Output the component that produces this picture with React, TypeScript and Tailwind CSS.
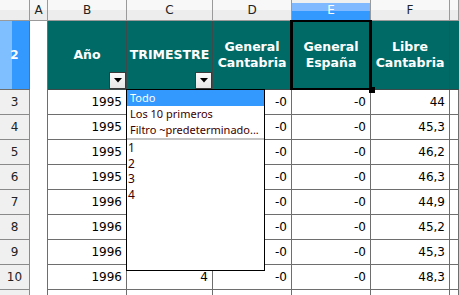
import React from "react";

const data = [
  { n: "3", b: "1995", c: "", d: "-0", e: "-0", f: "44" },
  { n: "4", b: "1995", c: "", d: "-0", e: "-0", f: "45,3" },
  { n: "5", b: "1995", c: "", d: "-0", e: "-0", f: "46,2" },
  { n: "6", b: "1995", c: "", d: "-0", e: "-0", f: "46,3" },
  { n: "7", b: "1996", c: "", d: "-0", e: "-0", f: "44,9" },
  { n: "8", b: "1996", c: "", d: "-0", e: "-0", f: "45,2" },
  { n: "9", b: "1996", c: "", d: "-0", e: "-0", f: "45,3" },
  { n: "10", b: "1996", c: "4", d: "-0", e: "-0", f: "48,3" },
  { n: "", b: "", c: "", d: "", e: "", f: "" },
];

function FilterButton() {
  return (
    <div className="absolute right-0 bottom-0 w-[17px] h-[17px] border border-[#3a3a3a] bg-[linear-gradient(to_bottom,#fafafa,#e6e6e6)] flex items-center justify-center">
      <svg width="8" height="5" viewBox="0 0 8 5">
        <path d="M0 0 L8 0 L4 4.5 Z" fill="#000" />
      </svg>
    </div>
  );
}

const colHead =
  "h-[21px] border-r border-b border-[#9a9a9a] bg-[linear-gradient(to_bottom,#f8f8f8_50%,#ededed_50%)] flex items-center justify-center text-[12px] text-[#222] leading-none";

const cell = "h-[25px] border-r border-b border-[#6e6e6e] bg-white flex items-center justify-end pr-[4px] text-[12px] text-black";

export default function App() {
  return (
    <div className="relative w-[459px] h-[295px] overflow-hidden bg-white font-['DejaVu_Sans',sans-serif]">
      {/* column header row */}
      <div className="flex">
        <div className={`w-[30px] ${colHead}`}></div>
        <div className={`w-[18px] ${colHead}`}>A</div>
        <div className={`w-[79px] ${colHead}`}>B</div>
        <div className={`w-[86px] ${colHead}`}>C</div>
        <div className={`w-[79px] ${colHead}`}>D</div>
        <div className="w-[79px] h-[21px] border-r border-b border-[#9a9a9a] bg-[linear-gradient(to_bottom,#f0f0f0_3px,#80b9ff_3px,#80b9ff_11px,#3399ff_11px)] flex items-center justify-center text-[12px] text-white leading-none">
          E
        </div>
        <div className={`w-[79px] ${colHead}`}>F</div>
        <div className={`flex-1 ${colHead}`}></div>
      </div>

      {/* header row 2 */}
      <div className="flex h-[69px]">
        <div className="w-[30px] border-r border-b border-[#6e6e6e] bg-[linear-gradient(to_right,#80bfff_12px,#3399ff_12px)] flex items-center justify-center text-[12px] font-bold text-white">
          2
        </div>
        <div className="w-[18px] border-r border-[#6e6e6e] bg-white"></div>
        <div className="relative w-[79px] border-r border-b border-[#3c4a4a] bg-[#006b66] flex items-center justify-center text-center text-[12.5px] font-bold leading-[16px] text-white">
          Año
          <FilterButton />
        </div>
        <div className="relative w-[86px] border-r border-b border-[#3c4a4a] bg-[#006b66] flex items-center justify-center text-center text-[12.5px] font-bold leading-[16px] text-white">
          TRIMESTRE
          <FilterButton />
        </div>
        <div className="w-[79px] border-r border-b border-[#3c4a4a] bg-[#006b66] flex items-center justify-center text-center text-[12.5px] font-bold leading-[16px] text-white whitespace-nowrap">
          General
          <br />
          Cantabria
        </div>
        <div className="w-[79px] border-r border-b border-[#3c4a4a] bg-[#006b66] flex items-center justify-center text-center text-[12.5px] font-bold leading-[16px] text-white whitespace-nowrap">
          General
          <br />
          España
        </div>
        <div className="w-[79px] border-r border-b border-[#3c4a4a] bg-[#006b66] flex items-center justify-center text-center text-[12.5px] font-bold leading-[16px] text-white whitespace-nowrap">
          Libre
          <br />
          Cantabria
        </div>
        <div className="flex-1 border-b border-[#3c4a4a] bg-[#006b66]"></div>
      </div>

      {/* data rows */}
      {data.map((r, i) => (
        <div key={i} className="flex">
          <div className="w-[30px] h-[25px] border-r border-b border-[#8a8a8a] bg-[#f0f0f0] flex items-center justify-center text-[12px] text-[#222]">
            {r.n}
          </div>
          <div className="w-[18px] h-[25px] border-r border-[#6e6e6e] bg-white"></div>
          <div className={`w-[79px] ${cell}`}>{r.b}</div>
          <div className={`w-[86px] ${cell}`}>{r.c}</div>
          <div className={`w-[79px] ${cell}`}>{r.d}</div>
          <div className={`w-[79px] ${cell}`}>{r.e}</div>
          <div className={`w-[79px] ${cell}`}>{r.f}</div>
          <div className={`flex-1 ${cell}`}></div>
        </div>
      ))}

      {/* selection cursor on E2 */}
      <div className="absolute left-[290px] top-[20px] w-[82px] h-[70px] border-x-[3px] border-y-2 border-black"></div>
      <div className="absolute left-[369px] top-[87px] w-[6px] h-[6px] bg-black"></div>

      {/* autofilter dropdown */}
      <div className="absolute left-[126px] top-[89px] w-[139px] h-[182px] border border-black bg-white font-['Noto_Sans',sans-serif] text-[11px] text-[#3d0000]">
        <div className="h-[16px] leading-[16px] bg-[#3399ff] text-white pl-[3px] whitespace-nowrap">Todo</div>
        <div className="h-[16px] leading-[16px] pl-[3px] whitespace-nowrap">Los 10 primeros</div>
        <div className="h-[16px] leading-[16px] pl-[3px] whitespace-nowrap">Filtro ~predeterminado...</div>
        <div className="h-[2px] bg-[#c4c4c4]"></div>
        <div className="pl-px text-[12px] leading-[15.5px]">
          <div>1</div>
          <div>2</div>
          <div>3</div>
          <div>4</div>
        </div>
      </div>
    </div>
  );
}
